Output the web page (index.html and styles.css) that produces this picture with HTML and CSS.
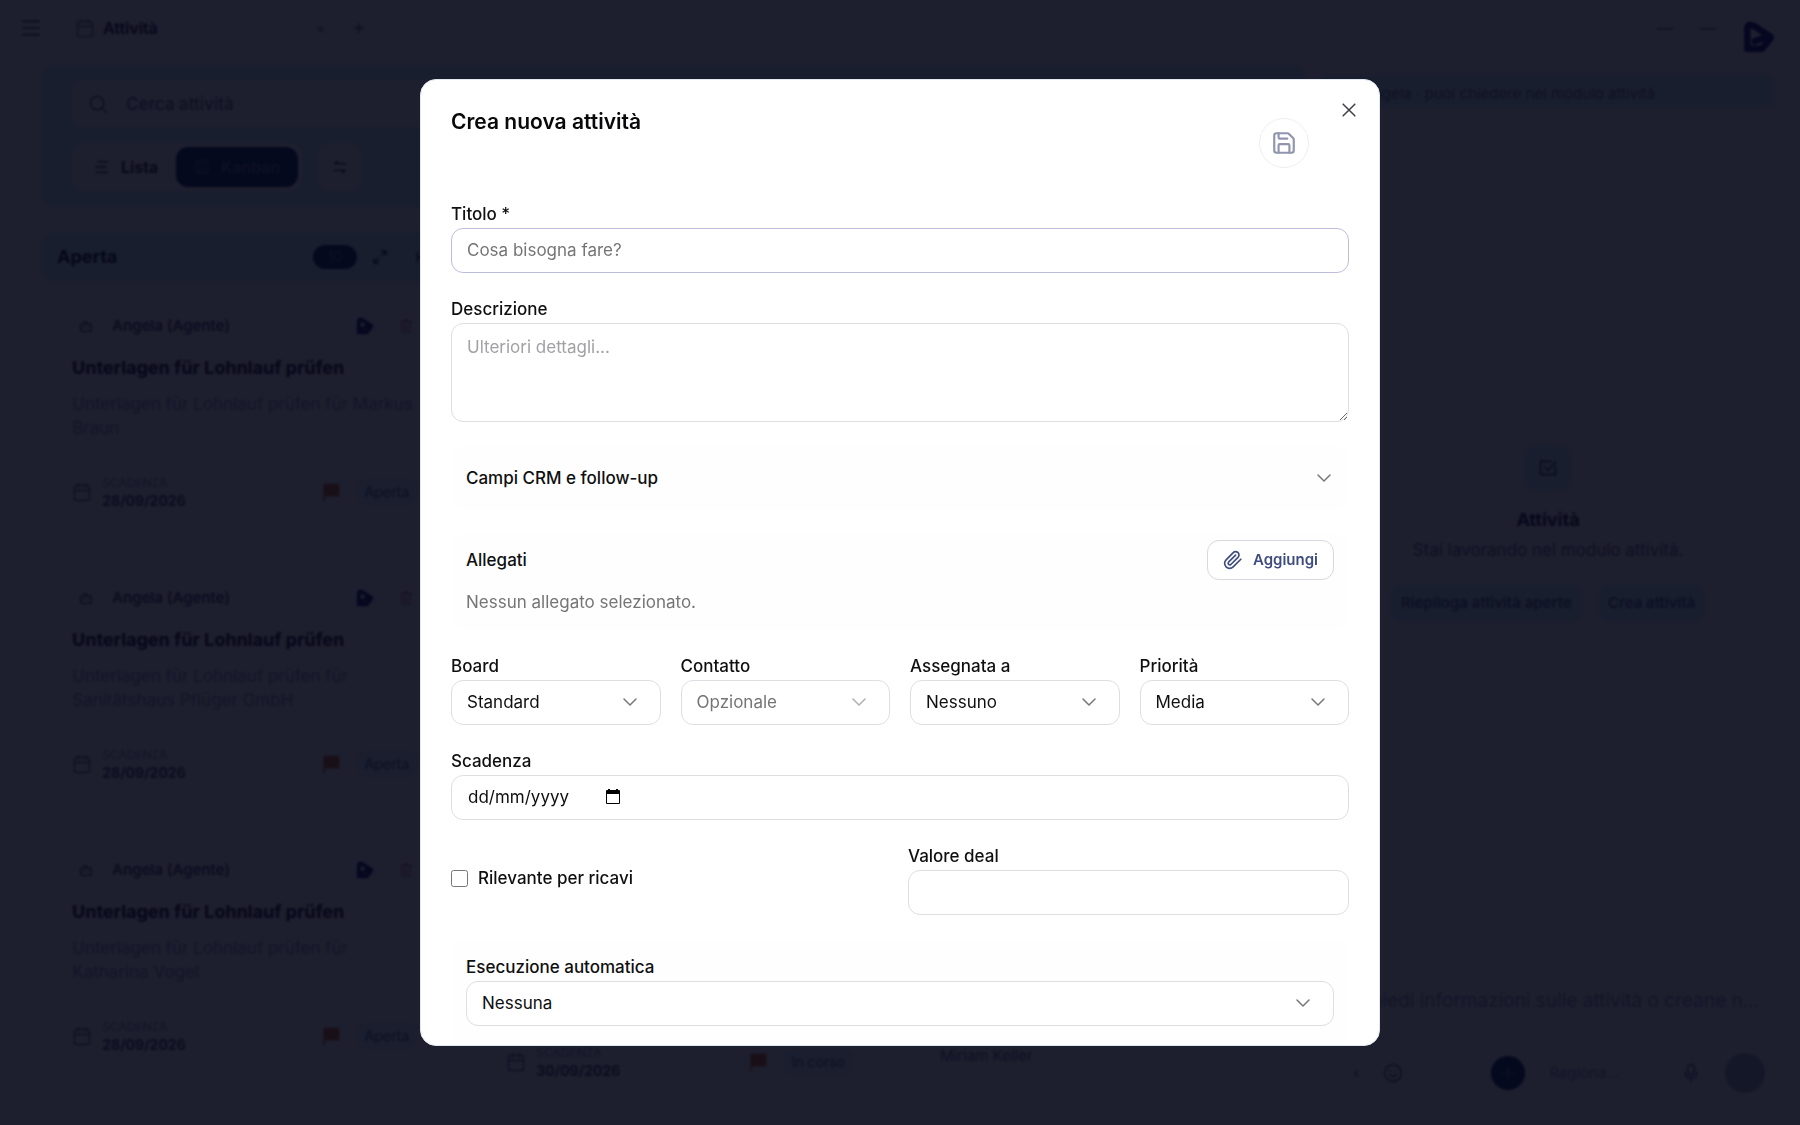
FILE: index.html
```html
<!DOCTYPE html>
<html lang="it">
<head>
    <meta charset="UTF-8">
    <meta name="viewport" content="width=device-width, initial-scale=1.0">
    <title>Attività</title>
    <link rel="stylesheet" href="styles.css">
</head>
<body>
    <svg class="sprite" aria-hidden="true">
        <symbol id="chevron" viewBox="0 0 24 24"><path d="m6 9 6 6 6-6"/></symbol>
        <symbol id="calendar" viewBox="0 0 24 24"><rect x="3" y="4" width="18" height="18" rx="2"/><path d="M3 10h18M8 2v4M16 2v4"/></symbol>
        <symbol id="bot" viewBox="0 0 24 24"><rect x="4" y="9" width="16" height="11" rx="2"/><path d="M12 9V5H9M9 14v1M15 14v1"/></symbol>
        <symbol id="flag" viewBox="0 0 24 24"><path d="M3 2h19v15H5v6H3z"/></symbol>
        <symbol id="trash" viewBox="0 0 24 24"><path d="M3 6h18M6 6v15h12V6M9 6V3h6v3M10 11v6M14 11v6"/></symbol>
        <symbol id="logo" viewBox="0 0 32 32"><path d="M5 27V9q0-7 7-3l15 10M5 27h14l8-10M12 20l14-5" /></symbol>
    </svg>

    <div class="app">
        <header class="topbar">
            <button type="button" class="plain" aria-label="Menu"><svg class="icon menu" viewBox="0 0 24 24"><path d="M2 4h20M2 12h20M2 20h20"/></svg></button>
            <div class="tab">
                <svg class="icon"><use href="#calendar"/></svg>
                <span>Attività</span>
                <small>×</small>
            </div>
            <button type="button" class="plain" aria-label="Nuova scheda"><svg class="icon small" viewBox="0 0 24 24"><path d="M12 5v14M5 12h14"/></svg></button>
            <span class="dash first">—</span>
            <span class="dash">—</span>
            <svg class="logo"><use href="#logo"/></svg>
        </header>

        <div class="workspace">
            <main class="board">
                <section class="toolbar">
                    <label class="search">
                        <svg class="icon" viewBox="0 0 24 24"><circle cx="11" cy="11" r="8"/><path d="m17 17 5 5"/></svg>
                        <input type="text" aria-label="Cerca attività" placeholder="Cerca attività">
                    </label>
                    <div class="views">
                        <div class="toggle">
                            <button type="button"><svg class="icon small" viewBox="0 0 24 24"><path d="M6 4h15M3 12h15M3 20h18"/></svg>Lista</button>
                            <button type="button" class="active"><svg class="icon small" viewBox="0 0 24 24"><rect x="3" y="3" width="18" height="18" rx="2"/><path d="M9 3v18M15 3v18"/></svg>Kanban</button>
                        </div>
                        <button type="button" class="sort" aria-label="Ordina"><svg class="icon small" viewBox="0 0 24 24"><path d="M21 7H4l4-4M3 17h17l-4 4"/></svg></button>
                    </div>
                </section>

                <div class="columns">
                    <section class="column">
                        <div class="column-head">
                            <h2>Aperta</h2>
                            <span class="count">10</span>
                            <svg class="icon small" viewBox="0 0 24 24"><path d="M14 3h7v7M21 3l-7 7M10 21H3v-7M3 21l7-7"/></svg>
                            <svg class="icon small collapse" viewBox="0 0 24 24"><path d="M5 4v16M5 12h14"/></svg>
                        </div>
                        <article class="card">
                            <div class="agent"><svg class="icon small"><use href="#bot"/></svg><b>Angela (Agente)</b><svg class="mini-logo"><use href="#logo"/></svg><svg class="icon small red"><use href="#trash"/></svg></div>
                            <h3>Unterlagen für Lohnlauf prüfen</h3>
                            <p>Unterlagen für Lohnlauf prüfen für Markus Braun</p>
                            <div class="due"><svg class="icon"><use href="#calendar"/></svg><div><small>SCADENZA</small><b>28/09/2026</b></div><svg class="flag"><use href="#flag"/></svg><span class="pill">Aperta</span></div>
                        </article>
                        <article class="card">
                            <div class="agent"><svg class="icon small"><use href="#bot"/></svg><b>Angela (Agente)</b><svg class="mini-logo"><use href="#logo"/></svg><svg class="icon small red"><use href="#trash"/></svg></div>
                            <h3>Unterlagen für Lohnlauf prüfen</h3>
                            <p>Unterlagen für Lohnlauf prüfen für<br>Sanitätshaus Pflüger GmbH</p>
                            <div class="due"><svg class="icon"><use href="#calendar"/></svg><div><small>SCADENZA</small><b>28/09/2026</b></div><svg class="flag"><use href="#flag"/></svg><span class="pill">Aperta</span></div>
                        </article>
                        <article class="card">
                            <div class="agent"><svg class="icon small"><use href="#bot"/></svg><b>Angela (Agente)</b><svg class="mini-logo"><use href="#logo"/></svg><svg class="icon small red"><use href="#trash"/></svg></div>
                            <h3>Unterlagen für Lohnlauf prüfen</h3>
                            <p>Unterlagen für Lohnlauf prüfen für<br>Katharina Vogel</p>
                            <div class="due"><svg class="icon"><use href="#calendar"/></svg><div><small>SCADENZA</small><b>28/09/2026</b></div><svg class="flag"><use href="#flag"/></svg><span class="pill">Aperta</span></div>
                        </article>
                    </section>
                    <section class="column bottom">
                        <div class="due"><svg class="icon"><use href="#calendar"/></svg><div><small>SCADENZA</small><b>30/09/2026</b></div><svg class="flag"><use href="#flag"/></svg><span class="pill">In corso</span></div>
                    </section>
                    <section class="column bottom">
                        <p class="contact">Miriam Keller</p>
                    </section>
                </div>
            </main>

            <aside class="chat">
                <p class="banner">Angela · puoi chiedere nel modulo attività</p>
                <div class="welcome">
                    <span class="badge"><svg class="icon" viewBox="0 0 24 24"><path d="M21 11v9H3V4h13M8 11l4 4 9-10"/></svg></span>
                    <h2>Attività</h2>
                    <p>Stai lavorando nel modulo attività.</p>
                    <div class="suggestions">
                        <button type="button">Riepiloga attività aperte</button>
                        <button type="button">Crea attività</button>
                    </div>
                </div>
                <div class="composer">
                    <p>Chiedi informazioni sulle attività o creane n…</p>
                    <div class="tools">
                        <span>‹</span>
                        <svg class="icon" viewBox="0 0 24 24"><circle cx="12" cy="12" r="10"/><path d="M8 14q4 4 8 0M9 9v1M15 9v1"/></svg>
                        <button type="button" class="round add" aria-label="Aggiungi"><svg class="icon" viewBox="0 0 24 24"><path d="M12 5v14M5 12h14"/></svg></button>
                        <span class="model">Ragiona…</span>
                        <svg class="icon" viewBox="0 0 24 24"><rect x="8" y="2" width="8" height="12" rx="4"/><path d="M5 11q0 7 7 7t7-7M12 18v4"/></svg>
                        <button type="button" class="round send" aria-label="Invia"></button>
                    </div>
                </div>
            </aside>
        </div>
    </div>

    <div class="overlay">
        <div class="modal" role="dialog" aria-labelledby="modalTitle">
            <button type="button" class="close" aria-label="Chiudi"><svg viewBox="0 0 24 24"><path d="M5 5l14 14M19 5 5 19"/></svg></button>
            <div class="modal-header">
                <h1 id="modalTitle">Crea nuova attività</h1>
                <button type="submit" form="taskForm" class="save" aria-label="Salva">
                    <svg viewBox="0 0 24 24"><path d="M15.2 3a2 2 0 0 1 1.4.6l3.8 3.8a2 2 0 0 1 .6 1.4V19a2 2 0 0 1-2 2H5a2 2 0 0 1-2-2V5a2 2 0 0 1 2-2z"/><path d="M17 21v-7a1 1 0 0 0-1-1H8a1 1 0 0 0-1 1v7M7 3v4a1 1 0 0 0 1 1h7"/></svg>
                </button>
            </div>

            <form id="taskForm">
                <div class="form-group">
                    <label for="titolo">Titolo *</label>
                    <input type="text" id="titolo" class="control title-input" placeholder="Cosa bisogna fare?">
                </div>
                <div class="form-group">
                    <label for="descrizione">Descrizione</label>
                    <textarea id="descrizione" class="control" placeholder="Ulteriori dettagli..."></textarea>
                </div>

                <button type="button" class="panel crm">
                    Campi CRM e follow-up
                    <svg class="chevron"><use href="#chevron"/></svg>
                </button>

                <section class="panel attachments">
                    <div class="panel-row">
                        <h2>Allegati</h2>
                        <button type="button" class="attach">
                            <svg viewBox="0 0 24 24"><path d="m21.4 11.1-9.2 9.2a6 6 0 0 1-8.5-8.5l8.6-8.6a4 4 0 1 1 5.7 5.7l-8.6 8.5a2 2 0 0 1-2.8-2.8l8.5-8.5"/></svg>
                            Aggiungi
                        </button>
                    </div>
                    <p>Nessun allegato selezionato.</p>
                </section>

                <div class="row four">
                    <div class="form-group">
                        <label for="board">Board</label>
                        <div class="select">
                            <select id="board" class="control"><option>Standard</option></select>
                            <svg class="chevron"><use href="#chevron"/></svg>
                        </div>
                    </div>
                    <div class="form-group">
                        <label for="contatto">Contatto</label>
                        <div class="select optional">
                            <select id="contatto" class="control"><option>Opzionale</option></select>
                            <svg class="chevron"><use href="#chevron"/></svg>
                        </div>
                    </div>
                    <div class="form-group">
                        <label for="assegnata">Assegnata a</label>
                        <div class="select">
                            <select id="assegnata" class="control"><option>Nessuno</option></select>
                            <svg class="chevron"><use href="#chevron"/></svg>
                        </div>
                    </div>
                    <div class="form-group">
                        <label for="priorita">Priorità</label>
                        <div class="select">
                            <select id="priorita" class="control"><option>Media</option></select>
                            <svg class="chevron"><use href="#chevron"/></svg>
                        </div>
                    </div>
                </div>

                <div class="form-group">
                    <label for="scadenza">Scadenza</label>
                    <div class="control date">
                        <input type="text" id="scadenza" placeholder="dd/mm/yyyy">
                        <svg viewBox="0 0 16 16"><path d="M3 0h2v1h6V0h2v1h1q1 0 1 1v12q0 1-1 1H2q-1 0-1-1V2q0-1 1-1h1zM2 5v9h12V5z"/></svg>
                    </div>
                </div>

                <div class="row two">
                    <div class="check">
                        <input type="checkbox" id="ricavi">
                        <label for="ricavi">Rilevante per ricavi</label>
                    </div>
                    <div class="form-group">
                        <label for="valore">Valore deal</label>
                        <input type="text" id="valore" class="control">
                    </div>
                </div>

                <section class="panel auto">
                    <div class="form-group">
                        <label for="esecuzione">Esecuzione automatica</label>
                        <div class="select">
                            <select id="esecuzione" class="control"><option>Nessuna</option></select>
                            <svg class="chevron"><use href="#chevron"/></svg>
                        </div>
                    </div>
                </section>
            </form>
        </div>
    </div>
</body>
</html>
```
FILE: styles.css
```css
* {
    box-sizing: border-box;
}

body {
    margin: 0;
    font-family: Inter, "Liberation Sans", sans-serif;
    font-size: 17px;
    line-height: 24px;
    color: #0f0f10;
}

h1, h2, h3, p {
    margin: 0;
}

button, input, select, textarea {
    font: inherit;
    color: inherit;
}

button {
    border: none;
    background: none;
    padding: 0;
    cursor: pointer;
}

svg {
    fill: none;
    stroke: currentColor;
    stroke-width: 2;
    stroke-linecap: round;
    stroke-linejoin: round;
    flex-shrink: 0;
}

.sprite {
    display: none;
}

.icon {
    width: 20px;
    height: 20px;
    display: block;
}

.icon.small {
    width: 16px;
    height: 16px;
}

/* page behind the dialog */
.app {
    height: 100vh;
    overflow: hidden;
    display: flex;
    flex-direction: column;
    background-color: white;
    color: #0f172a;
}

.topbar {
    display: flex;
    align-items: center;
    height: 56px;
    padding: 0 24px 0 20px;
    flex-shrink: 0;
}

.plain {
    color: #475569;
}

.menu {
    width: 22px;
}

.tab {
    display: flex;
    align-items: center;
    gap: 8px;
    width: 270px;
    margin: 0 6px 0 33px;
    font-size: 16px;
    font-weight: 600;
}

.tab .icon {
    color: #7c93a8;
}

.tab small {
    margin-left: auto;
    margin-right: 20px;
    color: #94a3b8;
}

.dash {
    margin-right: 26px;
    color: #64748b;
}

.dash.first {
    margin-left: auto;
}

.logo {
    width: 34px;
    height: 34px;
    margin-top: 18px;
    color: #0a0a6e;
    stroke-width: 6;
}

.workspace {
    display: flex;
    flex: 1;
    gap: 16px;
    min-height: 0;
    padding: 9px 25px 0 42px;
}

.board {
    flex: 1;
    min-width: 0;
    overflow: hidden;
}

.toolbar {
    padding: 15px 30px 16px;
    border-radius: 12px;
    background-color: #ccfafa;
}

.search {
    display: flex;
    align-items: center;
    gap: 16px;
    height: 47px;
    padding: 0 16px;
    border-radius: 10px;
    background-color: white;
}

.search .icon {
    color: #64748b;
}

.search input {
    border: none;
    background: none;
    flex: 1;
}

.search input::placeholder {
    color: #64748b;
}

.views {
    display: flex;
    gap: 16px;
    margin-top: 16px;
}

.toggle {
    display: flex;
    padding: 4px;
    border-radius: 12px;
    background-color: white;
    font-size: 16px;
    font-weight: 600;
}

.toggle button {
    display: flex;
    align-items: center;
    gap: 11px;
    height: 40px;
    padding: 0 18px;
    border-radius: 12px;
}

.toggle .active {
    background-color: #0b2a5c;
    color: #64748b;
}

.sort {
    width: 44px;
    border-radius: 12px;
    background-color: white;
    display: flex;
    align-items: center;
    justify-content: center;
}

.columns {
    display: flex;
    gap: 14px;
    margin-top: 25px;
}

.column {
    width: 420px;
    flex-shrink: 0;
}

.column.bottom {
    padding: 812px 30px 0;
}

.column-head {
    display: flex;
    align-items: center;
    gap: 15px;
    height: 50px;
    padding: 0 32px 0 15px;
    border-radius: 12px;
    background-color: #d6fafa;
}

.column-head h2 {
    font-size: 18px;
    flex: 1;
}

.collapse {
    margin-left: 11px;
}

.count {
    width: 44px;
    border-radius: 12px;
    background-color: #0b2a5c;
    color: #64748b;
    font-size: 14px;
    text-align: center;
}

.card {
    height: 272px;
    padding: 32px 48px 0 30px;
}

.agent {
    display: flex;
    align-items: center;
    gap: 24px;
    padding-left: 6px;
    font-size: 15px;
    color: #475569;
}

.agent b {
    flex: 1;
    font-weight: 600;
    margin-left: -6px;
}

.mini-logo {
    width: 18px;
    height: 18px;
    color: #0b1a6c;
    stroke-width: 7;
}

.red {
    color: #c78a98;
}

.card h3 {
    margin-top: 18px;
    font-size: 18px;
}

.card p {
    margin-top: 12px;
    margin-right: -20px;
    font-size: 17px;
    color: #94a3b8;
}

.due {
    display: flex;
    align-items: center;
    gap: 10px;
    margin-top: 34px;
    font-size: 14px;
    line-height: 18px;
    color: #475569;
}

.due .icon {
    color: #7c8ba0;
}

.due div {
    flex: 1;
}

.due b, .due small {
    display: block;
}

.due small {
    font-size: 12px;
    color: #94a3b8;
}

.flag {
    width: 20px;
    height: 20px;
    fill: #cc6a14;
    stroke: none;
}

.pill {
    padding: 4px 8px;
    margin-left: 6px;
    margin-right: -3px;
    border-radius: 8px;
    background-color: #e4fafa;
    color: #476a86;
}

.bottom .due {
    margin-top: 0;
    padding-right: 16px;
}

.contact {
    font-size: 15px;
    color: #64748b;
}

.chat {
    width: 454px;
    display: flex;
    flex-direction: column;
    padding: 9px 0 32px;
}

.banner {
    height: 34px;
    line-height: 40px;
    padding-right: 120px;
    border-radius: 8px;
    background-color: #d6fafa;
    color: #64748b;
    font-size: 15px;
    text-align: right;
}

.welcome {
    display: flex;
    flex-direction: column;
    align-items: center;
    flex: 1;
    padding-top: 336px;
}

.badge {
    padding: 14px;
    border-radius: 14px;
    background-color: #d6fafa;
    color: #334155;
}

.welcome h2 {
    margin-top: 16px;
    font-size: 18px;
}

.welcome p {
    margin-top: 6px;
    color: #64748b;
}

.suggestions {
    display: flex;
    gap: 16px;
    margin-top: 22px;
    font-size: 15px;
    font-weight: 600;
    color: #476a86;
}

.suggestions button {
    height: 38px;
    padding: 0 10px;
    border-radius: 10px;
    background-color: #d6fafa;
}

.composer p {
    color: #94a3b8;
    font-size: 19px;
    text-align: right;
    padding-right: 16px;
}

.tools {
    display: flex;
    align-items: center;
    justify-content: flex-end;
    gap: 24px;
    margin-top: 40px;
    padding-right: 10px;
    font-size: 15px;
    color: #64748b;
}

.round {
    display: flex;
    align-items: center;
    justify-content: center;
    border-radius: 50%;
}

.add {
    width: 34px;
    height: 34px;
    margin-left: 64px;
    background-color: #0b2a5c;
    color: #64748b;
}

.model {
    width: 86px;
    margin-right: 22px;
    color: #94a3b8;
}

.send {
    width: 40px;
    height: 40px;
    background-color: #a4b8c4;
}

/* dialog */
.overlay {
    position: fixed;
    inset: 0;
    display: flex;
    align-items: center;
    justify-content: center;
    background-color: rgba(4, 5, 23, 0.9);
    backdrop-filter: blur(1px);
}

.modal {
    position: relative;
    width: 960px;
    max-width: 95vw;
    height: 86vh;
    overflow: hidden;
    padding: 30px;
    border: 1px solid #e2e8f0;
    border-radius: 16px;
    background-color: white;
}

.close {
    position: absolute;
    top: 19px;
    right: 19px;
    width: 22px;
    height: 22px;
    color: #3f3f46;
}

.close svg {
    width: 20px;
    height: 20px;
    display: block;
    margin: auto;
    stroke-width: 1.8;
}

.modal-header {
    display: flex;
    align-items: flex-start;
    justify-content: space-between;
    padding-right: 40px;
}

.modal-header h1 {
    font-size: 21px;
    font-weight: 600;
    color: #09090b;
}

.save {
    display: flex;
    align-items: center;
    justify-content: center;
    width: 50px;
    height: 50px;
    margin-top: 8px;
    border: 1px solid #eeeef1;
    border-radius: 50%;
    color: #8f96ad;
}

.save svg {
    width: 26px;
    height: 26px;
}

form {
    display: flex;
    flex-direction: column;
    gap: 24px;
    margin-top: 34px;
}

.form-group {
    display: flex;
    flex-direction: column;
    gap: 2px;
    min-width: 0;
}

label, .crm, .panel h2 {
    font-size: 17px;
    font-weight: 500;
}

.control {
    width: 100%;
    height: 45px;
    padding: 0 15px;
    border: 1px solid #dedee2;
    border-radius: 12px;
    background-color: white;
    outline: none;
}

.control::placeholder {
    color: #757578;
}

.title-input {
    border-color: #bdbddb;
}

textarea.control {
    height: 99px;
    padding-top: 11px;
    resize: vertical;
}

textarea.control::placeholder {
    color: #a1a1a6;
}

.panel {
    padding: 16px 15px;
    border-radius: 12px;
    background-color: #fefefe;
}

.crm {
    display: flex;
    align-items: center;
    justify-content: space-between;
    height: 64px;
    text-align: left;
}

.chevron {
    width: 24px;
    height: 24px;
    color: #77777c;
    stroke-width: 1.5;
}

.crm .chevron {
    margin-right: -2px;
}

.attachments {
    padding-top: 6px;
}

.panel-row {
    display: flex;
    align-items: center;
    justify-content: space-between;
}

.attachments p {
    margin-top: 10px;
    color: #757578;
}

.attach {
    display: flex;
    align-items: center;
    gap: 10px;
    height: 40px;
    padding: 0 15px;
    border: 1px solid #d8d8de;
    border-radius: 12px;
    background-color: white;
    color: #3f4c80;
    font-size: 15px;
    font-weight: 600;
}

.attach svg {
    width: 20px;
    height: 20px;
}

.row {
    display: grid;
}

.four {
    grid-template-columns: repeat(4, 1fr);
    gap: 20px;
}

.two {
    grid-template-columns: 1fr 1fr;
    gap: 16px;
}

.select {
    position: relative;
}

.select select {
    display: block;
    appearance: none;
}

/* the arrow lies over the select box */
.select .chevron {
    position: absolute;
    top: 10px;
    right: 19px;
    pointer-events: none;
}

.optional select {
    color: #757578;
}

.optional .chevron {
    color: #b0b0b4;
}

.date {
    display: flex;
    align-items: center;
}

.date input {
    width: 138px;
    padding: 0 0 0 1px;
    border: none;
    outline: none;
}

.date input::placeholder {
    color: #0f0f10;
}

.date svg {
    width: 16px;
    height: 16px;
    fill: black;
    fill-rule: evenodd;
    stroke: none;
}

.check {
    display: flex;
    align-items: center;
    gap: 10px;
    padding-bottom: 2px;
}

.check input {
    width: 17px;
    height: 17px;
    margin: 0;
}
```
